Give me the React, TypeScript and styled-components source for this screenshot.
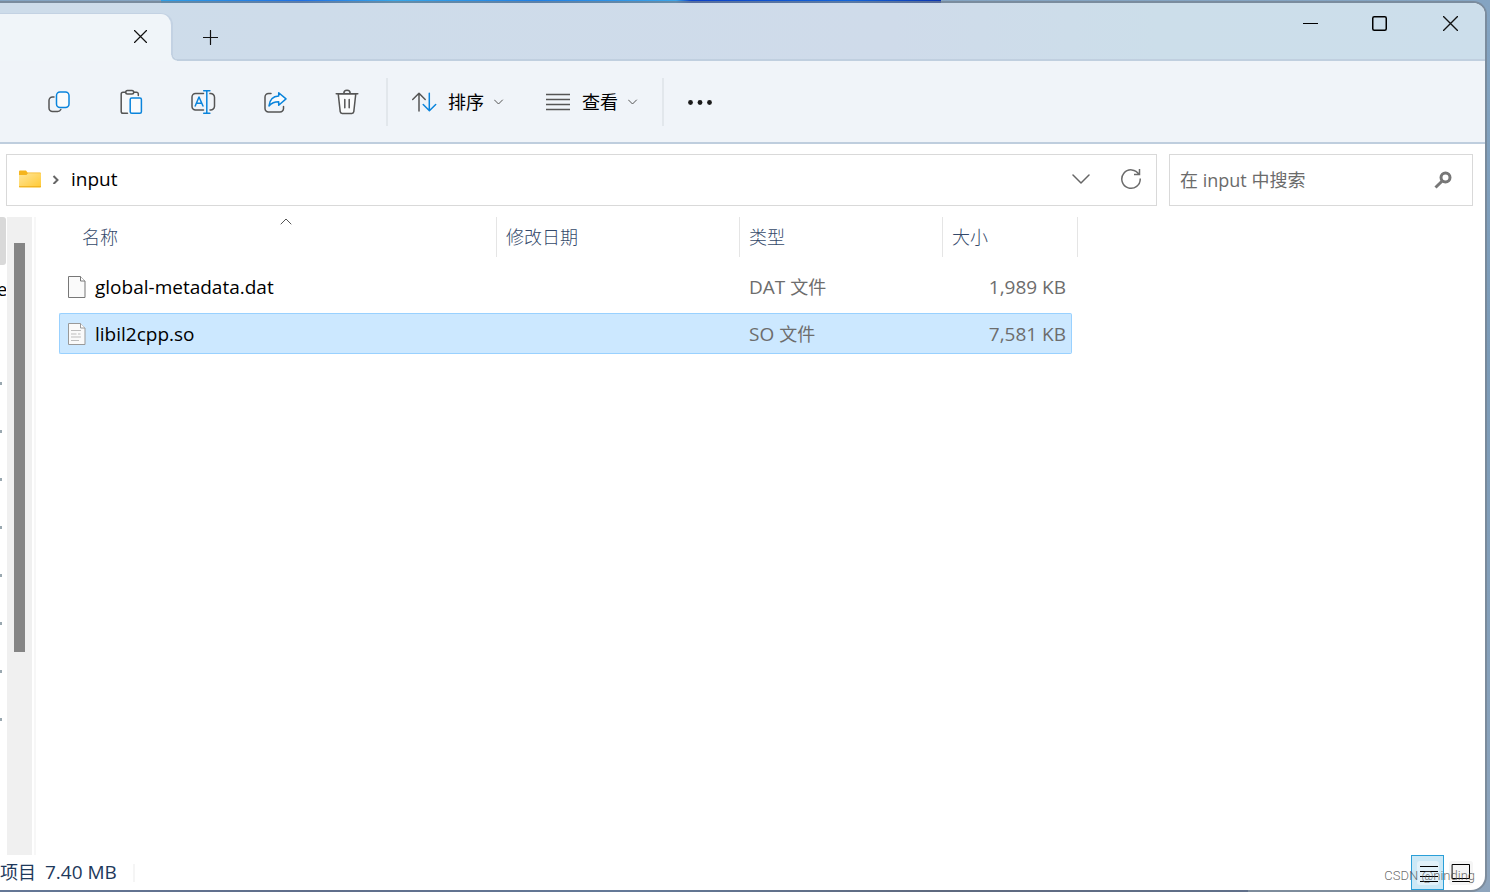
import React from 'react';
import styled, { createGlobalStyle, css } from 'styled-components';

const GlobalStyle = createGlobalStyle`
  * { box-sizing: border-box; }
  body {
    margin: 0;
    font-family: "Open Sans", "Noto Sans CJK SC", sans-serif;
    font-size: 18px;
    line-height: 24px;
    color: #000;
  }
  button {
    border: 0;
    margin: 0;
    padding: 0;
    background: none;
    font: inherit;
    color: inherit;
  }
  svg { display: block; flex: none; }
`;

const Desktop = styled.div`
  display: flex;
  min-height: 100vh;
  padding: 3px 5px 2px 0;
  background:
    linear-gradient(100deg, #2f9fe6 0%, #1e70e6 18%, #38a8ea 30%, #1f80e6 48%, #3ca5ea 66%, #0a40c8 68%, #1265dc 88%, #0a34b0 100%) 161px 0 / 780px 3px no-repeat,
    linear-gradient(90deg, #3a5fa8 0%, #2a3f80 25%, #3a66ae 50%, #26305a 75%, #2c4680 100%) 0 100% / 1248px 2px no-repeat,
    linear-gradient(180deg, #84a4c2 0%, #7b9bb8 40%, #8ea5bd 100%);
`;

const Window = styled.div`
  position: relative;
  flex: 1;
  min-width: 0;
  display: flex;
  flex-direction: column;
  overflow: hidden;
  background: #fff;
  border-radius: 0 12px 14px 0;
  box-shadow: 0 0 0 2px rgba(118, 130, 142, 0.7);
`;

const TitleBar = styled.header`
  display: flex;
  height: 58px;
  border-bottom: 2px solid #c0cfdf;
  background: linear-gradient(90deg, #cddcea 0%, #cedcea 20%, #cfdbea 60%, #ccdeea 78%, #ccdeeb 100%);
`;

const Tab = styled.div`
  position: relative;
  display: flex;
  align-items: center;
  justify-content: flex-end;
  width: 173px;
  height: 48px;
  margin-top: 10px;
  padding: 0 15px 2px 0;
  background: #f0f5f9;
  border: solid #c3d2e3;
  border-width: 1px 2px 0 0;
  border-radius: 0 12px 0 0;
  &::after {
    content: "";
    position: absolute;
    left: 100%;
    bottom: 0;
    width: 6px;
    height: 6px;
    background: radial-gradient(circle at 100% 0, transparent 4px, #c0cfdf 4px, #c0cfdf 5px, #f0f5f9 6px);
  }
`;

const TabButton = styled.button`
  display: grid;
  place-items: center;
  width: 32px;
  height: 32px;
`;

const NewTab = styled(TabButton)`
  margin: 18px 0 0 21px;
`;

const WindowControls = styled.div`
  display: flex;
  margin-left: auto;
`;

const WindowButton = styled.button`
  display: grid;
  place-items: center;
  width: 70px;
  height: 41px;
`;

const ToolBar = styled.div`
  display: flex;
  align-items: center;
  height: 83px;
  padding-left: 23px;
  border-bottom: 2px solid #bfcede;
  background: #f0f4f9;
  color: #000;
`;

const ToolButton = styled.button`
  display: grid;
  place-items: center;
  width: 72px;
  height: 48px;
`;

const MenuButton = styled.button`
  display: flex;
  align-items: center;
  gap: 10px;
  height: 48px;
  margin-left: 22px;
  & + & { margin-left: 42px; }
`;

const ToolDivider = styled.span<{ $before: number }>`
  width: 2px;
  height: 48px;
  margin-left: ${(p) => p.$before}px;
  background: #e2e7ec;
`;

const LocationBar = styled.div`
  display: flex;
  gap: 12px;
  padding: 10px 12px 11px 6px;
`;

const boxed = css`
  display: flex;
  align-items: center;
  height: 52px;
  border: 1px solid #d9d9d9;
  background: #fff;
`;

const AddressBox = styled.nav`
  ${boxed}
  flex: 1;
  min-width: 0;
  padding: 0 0 2px 12px;
`;

const Crumb = styled.button`
  flex: 1;
  padding-left: 4px;
  text-align: left;
  font-size: 19px;
`;

const AddressButton = styled.button`
  display: grid;
  place-items: center;
  width: 50px;
  height: 48px;
`;

const SearchBox = styled.label`
  ${boxed}
  width: 304px;
  padding: 0 20px 0 10px;
`;

const SearchInput = styled.input`
  flex: 1;
  min-width: 0;
  padding: 0;
  border: 0;
  outline: 0;
  background: none;
  font: inherit;
  color: #6b6b6b;
  &::placeholder { color: #6b6b6b; opacity: 1; }
`;

const Body = styled.div`
  flex: 1;
  display: flex;
`;

const Sidebar = styled.aside`
  width: 7px;
  overflow: hidden;
`;

const SideItem = styled.div<{ $current?: boolean }>`
  display: flex;
  align-items: center;
  height: 48px;
  width: 6px;
  padding-bottom: 3px;
  overflow: hidden;
  border-radius: 0 3px 3px 0;
  background: ${(p) => (p.$current ? '#d9d9d9' : 'transparent')};
`;

const SideLabel = styled.span`
  width: 7px;
  padding-top: 3px;
  display: flex;
  flex: none;
  justify-content: flex-end;
`;

const Pin = styled.span`
  width: 2px;
  height: 3px;
  background: #9aa8b0;
`;

const ScrollTrack = styled.div`
  width: 25px;
  padding: 26px 7px 0;
  background: #f0f0f0;
`;

const ScrollThumb = styled.div`
  height: 409px;
  width: 11px;
  background: #858585;
`;

const Main = styled.main`
  flex: 1;
  min-width: 0;
  margin-left: 2px;
  padding-left: 23px;
  border-left: 2px solid #f7f7f7;
`;

const FileTable = styled.table`
  width: 1013px;
  margin-top: -6px;
  table-layout: fixed;
  border-collapse: separate;
  border-spacing: 0 6px;
`;

const Col = styled.col<{ $w: number }>`
  width: ${(p) => p.$w}px;
`;

const HeadCell = styled.th`
  position: relative;
  height: 43px;
  padding: 0 0 3px;
  font-weight: 300;
  text-align: left;
  vertical-align: top;
  color: #34496a;
`;

const HeadLabel = styled.div<{ $indent?: number; $overhang?: number }>`
  height: 40px;
  margin-right: -${(p) => p.$overhang ?? 0}px;
  padding: 8px 0 0 ${(p) => p.$indent ?? 9}px;
  border-right: 1px solid #e5e5e5;
`;

const SortMark = styled.span`
  position: absolute;
  top: 1px;
  left: 15px;
  right: 0;
  display: flex;
  justify-content: center;
`;

const Latin = styled.span`
  font-size: 19px;
  font-weight: 400;
`;

const Row = styled.tr<{ $selected?: boolean }>`
  td {
    height: 41px;
    padding: 0 0 0 9px;
    border: 1px solid transparent;
    border-width: 1px 0;
    color: #6d6d6d;
    ${(p) => p.$selected && css`
      background: #cce8ff;
      border-color: #99d1ff;
    `}
  }
  td:first-child {
    padding-left: 8px;
    border-left-width: 1px;
    border-radius: 2px 0 0 2px;
    color: #000;
  }
  td:last-child {
    padding-right: 5px;
    border-right-width: 1px;
    border-radius: 0 2px 2px 0;
    text-align: right;
  }
`;

const FileName = styled.span`
  display: flex;
  align-items: center;
  gap: 9px;
  font-size: 19px;
`;

const StatusBar = styled.footer`
  display: flex;
  align-items: center;
  height: 35px;
  padding-right: 8px;
  color: #1e395b;
`;

const StatusText = styled.span`
  padding-bottom: 2px;
`;

const StatusSize = styled.span`
  margin: 0 16px 2px 9px;
  font-size: 19px;
`;

const StatusDivider = styled.span`
  width: 2px;
  height: 18px;
  background: #f5f5f5;
`;

const ViewButtons = styled.div`
  display: flex;
  margin-left: auto;
`;

const ViewButton = styled.button<{ $active?: boolean }>`
  display: grid;
  place-items: center;
  width: 33px;
  height: 35px;
  border: 1px solid ${(p) => (p.$active ? '#2a9fd8' : 'transparent')};
  background: ${(p) => (p.$active ? '#cbe8f6' : 'transparent')};
`;

const Watermark = styled.span`
  position: absolute;
  right: 10px;
  bottom: 5px;
  font: 300 13px/18px Roboto, sans-serif;
  color: rgba(80, 80, 80, 0.85);
  pointer-events: none;
`;

const ink = '#555';
const blue = '#0a84dc';

const Icon = ({ w = 28, h = 28, children }: { w?: number; h?: number; children: React.ReactNode }) => (
  <svg width={w} height={h} viewBox={`0 0 ${w} ${h}`} fill="none" stroke={ink} strokeWidth="1.5" strokeLinecap="round" strokeLinejoin="round" aria-hidden="true">
    {children}
  </svg>
);

const CopyIcon = () => (
  <Icon>
    <path d="M9 9H7.500A3.500 3.500 0 0 0 4 12.500V20a3.500 3.500 0 0 0 3.500 3.500h5a3.500 3.500 0 0 0 3.300-2" />
    <rect x="11.500" y="4" width="12.500" height="15.500" rx="3.500" fill="#fafbfc" stroke={blue} />
  </Icon>
);

const PasteIcon = () => (
  <Icon>
    <path d="M4.200 4.500H21.300V25.300H4.200Z" fill="#f7f9fb" stroke="none" />
    <path d="M10.500 25.300H6A1.800 1.800 0 0 1 4.200 23.500V6A1.800 1.800 0 0 1 6 4.200h2.500M17 4.200h2.500A1.800 1.800 0 0 1 21.300 6v1.500" />
    <rect x="8.700" y="2.500" width="8" height="3.500" rx="1.750" />
    <rect x="13.200" y="10" width="11.200" height="15.300" rx="1.500" fill="#fafbfc" stroke={blue} />
  </Icon>
);

const RenameIcon = () => (
  <Icon>
    <path d="M14.500 5.500H6.500A3.500 3.500 0 0 0 3 9v9.500A3.500 3.500 0 0 0 6.500 22h8M21 5.500a3.800 3.800 0 0 1 4.500 3.700v9.100A3.800 3.800 0 0 1 21 22" />
    <path d="M17.800 2.700v22.600M14.700 2.700h6.200M14.700 25.300h6.200M6.200 18 10 9l4 9M7.500 15.200h5.200" stroke={blue} />
  </Icon>
);

const ShareIcon = () => (
  <Icon>
    <path d="M10 5.500H7.500A3.500 3.500 0 0 0 4 9v11.500A3.500 3.500 0 0 0 7.500 24h11.500a3.500 3.500 0 0 0 3.500-3.500V18.500" />
    <path d="M17.700 4.700 25 10.900l-7.300 6.300v-3.500c-4 0-7 1-9.700 4.200.6-6 4.200-9.600 9.700-9.900Z" fill="#fafbfc" stroke={blue} />
  </Icon>
);

const TrashIcon = () => (
  <Icon>
    <path d="M5.200 5.700 7.200 23.600a2 2 0 0 0 2 1.800h9.600a2 2 0 0 0 2-1.800L22.800 5.700Z" fill="#fafbfc" />
    <path d="M3.200 5.700h21.600M10.800 5.500a3.200 3.200 0 0 1 6.400 0M11.800 11.500v8.200M16.200 11.500v8.200" />
  </Icon>
);

const SortIcon = () => (
  <Icon>
    <path d="M9 23V5.500M2.700 11.500 9 5.300l6.200 6.200" />
    <path d="M19.300 5.200V22.500M13.200 16.500l6.200 6.200 6.300-6.200" stroke={blue} />
  </Icon>
);

const ViewIcon = () => (
  <Icon w={26}>
    <path d="M0 6.500h24M0 11.500h24M0 16.500h24M0 21.500h24" strokeLinecap="butt" />
  </Icon>
);

const SmallChevron = () => (
  <Icon w={10} h={6}>
    <path d="M.5 1l4 4 4-4" strokeWidth="1" />
  </Icon>
);

const CloseIcon = ({ size, weight }: { size: number; weight: number }) => (
  <Icon w={size} h={size}>
    <path d={`M.5 .5L${size - 0.5} ${size - 0.5}M${size - 0.5} .5L.5 ${size - 0.5}`} stroke="#111" strokeWidth={weight} />
  </Icon>
);

const PageIcon = ({ lines }: { lines?: boolean }) => (
  <svg width="18" height="22" viewBox="0 0 18 22" fill="none" aria-hidden="true">
    <path d="M.5 .5h12l4.500 4.500v16.500H.5Z" fill="#fafafa" stroke={lines ? '#999' : '#777'} />
    <path d="M12.500 .5V5H17" stroke={lines ? '#999' : '#777'} fill="#fff" />
    {lines && <path d="M3 7.500h10M3 11h5.500M10 11h2.500M3 14h10M3 17.500h8" stroke="#bdbdbd" />}
  </svg>
);

const FolderIcon = () => (
  <svg width="22" height="18" viewBox="0 0 22 18" aria-hidden="true">
    <defs>
      <linearGradient id="folder" x1="0" y1="0" x2="1" y2="1">
        <stop offset="0" stopColor="#ffe69b" />
        <stop offset="1" stopColor="#ffc933" />
      </linearGradient>
    </defs>
    <path d="M0 1.500Q0 .5 1 .5h6l1.500 2H21q1 0 1 1V8H0Z" fill="#f5b51e" />
    <path d="M0 5h7.500L9 3.200h13V16.500q0 1-1 1H1q-1 0-1-1Z" fill="url(#folder)" />
    <path d="M0 16.700h22" stroke="#eeae1c" />
  </svg>
);

const files = [
  { name: 'global-metadata.dat', kind: 'DAT', size: '1,989 KB', selected: false },
  { name: 'libil2cpp.so', kind: 'SO', size: '7,581 KB', selected: true },
];

const pins = [1, 2, 3, 4, 5, 6, 7, 8];

export default function App() {
  return (
    <Desktop>
      <GlobalStyle />
      <Window>
        <TitleBar>
          <Tab>
            <TabButton aria-label="关闭标签页"><CloseIcon size={13} weight={1.2} /></TabButton>
          </Tab>
          <NewTab aria-label="新建标签页">
            <Icon w={15} h={15}><path d="M7.500 .5v14M.5 7.500h14" stroke="#111" strokeWidth="1.200" /></Icon>
          </NewTab>
          <WindowControls>
            <WindowButton aria-label="最小化">
              <Icon w={15} h={15}><path d="M0 7.500h15" stroke="#000" strokeWidth="1" strokeLinecap="butt" /></Icon>
            </WindowButton>
            <WindowButton aria-label="最大化">
              <Icon w={16} h={15}><rect x=".75" y=".75" width="13.500" height="13.500" rx="1.500" stroke="#000" /></Icon>
            </WindowButton>
            <WindowButton aria-label="关闭"><CloseIcon size={15} weight={1.4} /></WindowButton>
          </WindowControls>
        </TitleBar>

        <ToolBar>
          <ToolButton aria-label="复制"><CopyIcon /></ToolButton>
          <ToolButton aria-label="粘贴"><PasteIcon /></ToolButton>
          <ToolButton aria-label="重命名"><RenameIcon /></ToolButton>
          <ToolButton aria-label="共享"><ShareIcon /></ToolButton>
          <ToolButton aria-label="删除"><TrashIcon /></ToolButton>
          <ToolDivider $before={3} />
          <MenuButton><SortIcon />排序<SmallChevron /></MenuButton>
          <MenuButton><ViewIcon />查看<SmallChevron /></MenuButton>
          <ToolDivider $before={24} />
          <ToolButton aria-label="更多">
            <Icon w={24} h={6}>
              <g fill="#1b1b1b" stroke="none">
                <circle cx="2.500" cy="3.500" r="2.400" />
                <circle cx="12" cy="3.500" r="2.400" />
                <circle cx="21.500" cy="3.500" r="2.400" />
              </g>
            </Icon>
          </ToolButton>
        </ToolBar>

        <LocationBar>
          <AddressBox aria-label="地址">
            <FolderIcon />
            <Icon w={26} h={10}><path d="M12.500 2l4 4-4 4" stroke="#666" strokeWidth="2" strokeLinecap="butt" strokeLinejoin="miter" /></Icon>
            <Crumb>input</Crumb>
            <AddressButton aria-label="以前的位置">
              <Icon w={18} h={10}><path d="M1 1l8 8 8-8" stroke="#666" /></Icon>
            </AddressButton>
            <AddressButton aria-label="刷新">
              <Icon w={22} h={22}>
                <path d="M19 6.500A9.200 9.200 0 1 0 20.200 10.500M19.500 1v5.500h-5.500" stroke="#6b6b6b" strokeLinecap="butt" strokeLinejoin="miter" />
              </Icon>
            </AddressButton>
          </AddressBox>
          <SearchBox>
            <SearchInput type="text" aria-label="搜索" placeholder="在 input 中搜索" />
            <Icon w={18} h={18}>
              <circle cx="11.500" cy="6.500" r="4.500" stroke="#777" strokeWidth="3" />
              <path d="M8.200 10 1.500 16.500" stroke="#777" strokeWidth="3" strokeLinecap="butt" />
            </Icon>
          </SearchBox>
        </LocationBar>

        <Body>
          <Sidebar>
            <SideItem $current />
            <SideItem><SideLabel>e</SideLabel></SideItem>
            <SideItem />
            {pins.map((n) => <SideItem key={n}><Pin /></SideItem>)}
          </Sidebar>
          <ScrollTrack><ScrollThumb /></ScrollTrack>
          <Main>
            <FileTable>
              <colgroup>
                <Col $w={438} />
                <Col $w={243} />
                <Col $w={203} />
                <Col $w={129} />
              </colgroup>
              <thead>
                <tr>
                  <HeadCell aria-sort="ascending">
                    <HeadLabel $indent={23}>名称</HeadLabel>
                    <SortMark><Icon w={12} h={7}><path d="M1 6l5-5 5 5" strokeWidth="1" /></Icon></SortMark>
                  </HeadCell>
                  <HeadCell><HeadLabel>修改日期</HeadLabel></HeadCell>
                  <HeadCell><HeadLabel>类型</HeadLabel></HeadCell>
                  <HeadCell><HeadLabel $overhang={6}>大小</HeadLabel></HeadCell>
                </tr>
              </thead>
              <tbody>
                {files.map((f) => (
                  <Row key={f.name} $selected={f.selected}>
                    <td><FileName><PageIcon lines={f.selected} />{f.name}</FileName></td>
                    <td />
                    <td><Latin>{f.kind} </Latin>文件</td>
                    <td><Latin>{f.size}</Latin></td>
                  </Row>
                ))}
              </tbody>
            </FileTable>
          </Main>
        </Body>

        <StatusBar>
          <StatusText>项目</StatusText>
          <StatusSize>7.40 MB</StatusSize>
          <StatusDivider />
          <ViewButtons>
            <ViewButton $active aria-label="详细信息">
              <Icon w={22} h={24}>
                <rect width="22" height="24" rx="3" fill="#e2f1f9" stroke="none" />
                <path d="M3 5.500h18M3 10.500h18M3 15.500h18M3 20.500h18" stroke="#000" strokeWidth="1" strokeLinecap="butt" />
              </Icon>
            </ViewButton>
            <ViewButton aria-label="大缩略图">
              <Icon w={24} h={24}>
                <rect width="24" height="24" rx="3" fill="#f5f5f5" stroke="none" />
                <path d="M3.500 3.500h17v14h-17ZM3.500 20.500h17" stroke="#000" strokeWidth="1" />
              </Icon>
            </ViewButton>
          </ViewButtons>
        </StatusBar>
        <Watermark>CSDN @ninding</Watermark>
      </Window>
    </Desktop>
  );
}
